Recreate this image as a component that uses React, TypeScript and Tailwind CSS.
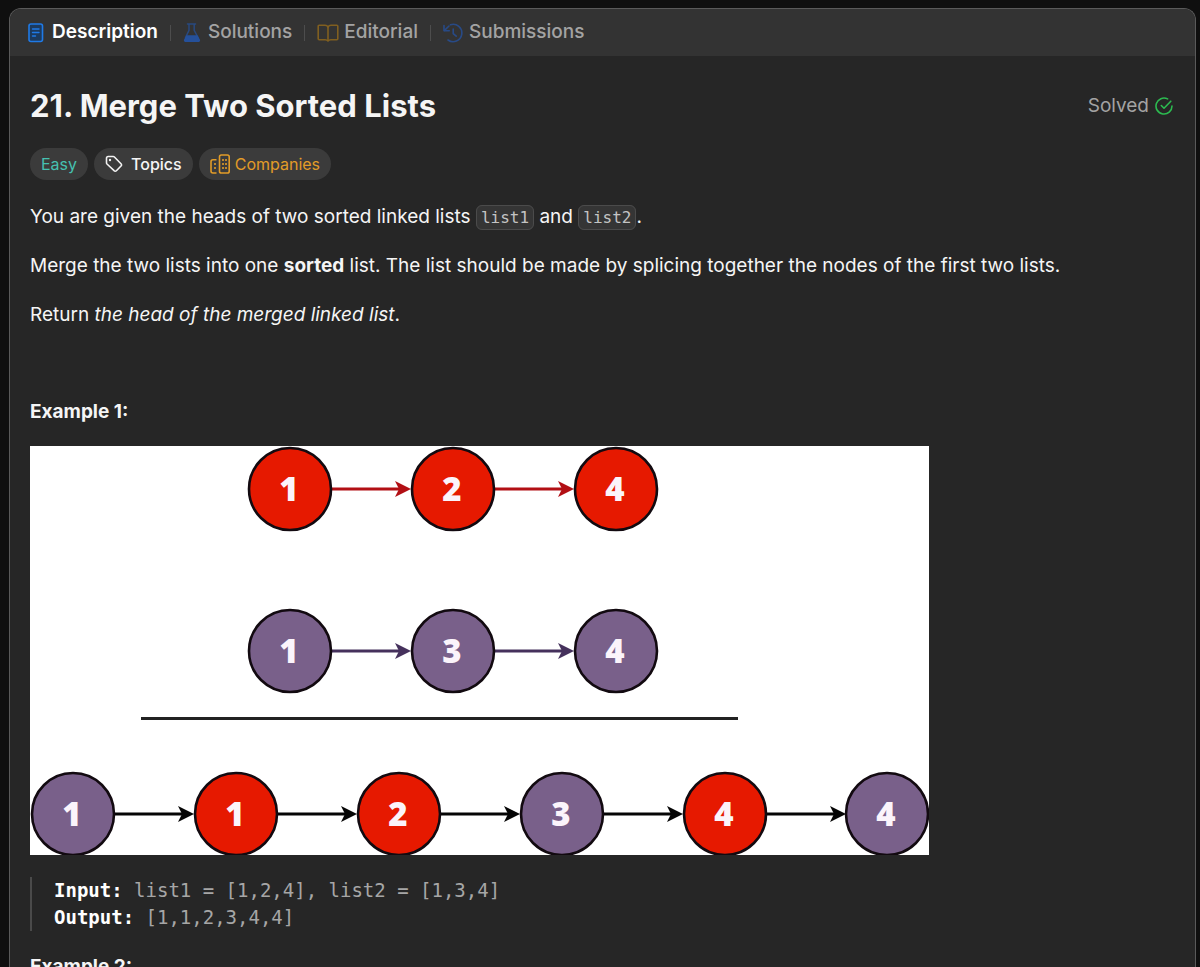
import React from 'react'

const RED = '#e61900'
const PURPLE = '#79608a'

type NodeItem = { x: number; y: number; value: number; fill: string }
type ArrowItem = { x: number; y: number; color: string }

const nodes: NodeItem[] = [
  { x: 260, y: 43, value: 1, fill: RED },
  { x: 423, y: 43, value: 2, fill: RED },
  { x: 586, y: 43, value: 4, fill: RED },
  { x: 260, y: 205, value: 1, fill: PURPLE },
  { x: 423, y: 205, value: 3, fill: PURPLE },
  { x: 586, y: 205, value: 4, fill: PURPLE },
  { x: 43, y: 368, value: 1, fill: PURPLE },
  { x: 206, y: 368, value: 1, fill: RED },
  { x: 369, y: 368, value: 2, fill: RED },
  { x: 532, y: 368, value: 3, fill: PURPLE },
  { x: 695, y: 368, value: 4, fill: RED },
  { x: 857, y: 368, value: 4, fill: PURPLE },
]

const arrows: ArrowItem[] = [
  { x: 302, y: 43, color: '#b20f14' },
  { x: 465, y: 43, color: '#b20f14' },
  { x: 302, y: 205, color: '#45315c' },
  { x: 465, y: 205, color: '#45315c' },
  { x: 85, y: 368, color: '#050505' },
  { x: 248, y: 368, color: '#050505' },
  { x: 411, y: 368, color: '#050505' },
  { x: 574, y: 368, color: '#050505' },
  { x: 737, y: 368, color: '#050505' },
]

function DescriptionIcon() {
  return (
    <svg className="w-4 h-5" viewBox="0 0 16 20" fill="none" stroke="#1f7ae6" aria-hidden="true">
      <rect x="1" y="1" width="13.5" height="17.5" rx="2" fill="#1c3a5e" strokeWidth="1.6" />
      <path d="M4.500 6h6.500M4.500 9.500h6.500M4.500 13h3" strokeWidth="1.4" strokeLinecap="round" />
    </svg>
  )
}

function FlaskIcon() {
  return (
    <svg className="w-[18px] h-5" viewBox="0 0 18 20" fill="none" aria-hidden="true">
      <path d="M4.500 1h8M6 1v6.400L2.500 14.500M11.200 1v6.400L15 14.500" stroke="#29497f" strokeWidth="1.5" strokeLinecap="round" />
      <path d="M3.500 12.200h11l2.400 4.400a1.600 1.600 0 0 1-1.400 2.400h-13a1.600 1.600 0 0 1-1.400-2.400z" fill="#25509a" />
    </svg>
  )
}

function BookIcon() {
  return (
    <svg className="w-[22px] h-5" viewBox="0 0 22 20" fill="none" stroke="#805f20" strokeWidth="1.6" strokeLinejoin="round" aria-hidden="true">
      <path d="M11 4c-.7-1.200-1.700-1.800-3-1.800H2.200c-.6 0-1 .4-1 1V15.800c0 .6.4 1 1 1h6c1.200 0 2.200.4 2.800 1.200.6-.8 1.600-1.200 2.800-1.200h6c.6 0 1-.4 1-1V3.200c0-.6-.4-1-1-1H14c-1.300 0-2.300.6-3 1.800z" />
      <path d="M11 4v14" />
    </svg>
  )
}

function HistoryIcon() {
  return (
    <svg className="w-5 h-5" viewBox="0 0 20 20" fill="none" stroke="#284a86" strokeWidth="1.6" strokeLinecap="round" strokeLinejoin="round" aria-hidden="true">
      <path d="M7.500 1.700A8.700 8.700 0 1 1 5 17" />
      <path d="M1 2.500v5.300h5.300" />
      <path d="M1.500 7.400 6 3" />
      <path d="M10.200 6v4.600l3 2.600" />
    </svg>
  )
}

function SolvedIcon() {
  return (
    <svg className="w-[18px] h-[18px]" viewBox="0 0 18 18" fill="none" stroke="#2cba50" strokeWidth="1.6" strokeLinecap="round" strokeLinejoin="round" aria-hidden="true">
      <path d="M12.600 1.900A8 8 0 1 0 17 9" />
      <path d="M6.300 8.500 9 11.200l6.800-7" />
    </svg>
  )
}

function TagIcon() {
  return (
    <svg className="w-[18px] h-[18px]" viewBox="0 0 18 18" fill="none" stroke="#f2f2f2" strokeWidth="1.600" strokeLinejoin="round" aria-hidden="true">
      <path d="M1.500 3.200c0-1 .7-1.700 1.700-1.700h5c.5 0 .9.200 1.200.5l6.600 6.700c.7.700.7 1.700 0 2.300l-4.600 4.700c-.7.700-1.700.7-2.300 0L2 9c-.3-.3-.5-.7-.5-1.200z" />
      <circle cx="5" cy="5" r="1.200" fill="#f2f2f2" stroke="none" />
    </svg>
  )
}

function CompaniesIcon() {
  return (
    <svg className="w-5 h-5" viewBox="0 0 20 20" fill="none" stroke="#e29c28" strokeWidth="1.600" strokeLinejoin="round" aria-hidden="true">
      <rect x="9.500" y="1" width="9.700" height="18" rx="1.800" />
      <path d="M6.500 5.800H3c-1.200 0-2 .8-2 2V17c0 1.200.8 2 2 2h3.500" />
      <path d="M13 5v2M13 9v2M13 13v2M16 5v2M16 9v2M16 13v2M5 9v2M5 13v2" strokeWidth="1.600" />
    </svg>
  )
}

const tabs = [
  { label: 'Description', icon: <DescriptionIcon />, style: 'gap-2 text-white font-semibold' },
  { label: 'Solutions', icon: <FlaskIcon />, style: 'gap-[7px] text-[#a3a3a3] font-medium' },
  { label: 'Editorial', icon: <BookIcon />, style: 'gap-[5px] text-[#a3a3a3] font-medium' },
  { label: 'Submissions', icon: <HistoryIcon />, style: 'gap-[6px] text-[#a3a3a3] font-medium' },
]

function Code({ children }: { children: React.ReactNode }) {
  return (
    <code className="rounded-md border border-[#4b4b4b] bg-[#353535] px-1 py-[2px] font-['DejaVu_Sans_Mono',monospace] text-base text-[#c4c4c4]">
      {children}
    </code>
  )
}

function MergeDiagram() {
  return (
    <svg
      className="mt-5 block w-full max-w-[899px] bg-white"
      viewBox="0 0 899 409"
      role="img"
      aria-label="Two sorted linked lists merged into one"
    >
      {arrows.map((a) => (
        <g key={`${a.x}-${a.y}`}>
          <path d={`M${a.x} ${a.y}h70`} stroke={a.color} strokeWidth="2.800" />
          <path d={`M${a.x + 79} ${a.y}l-16 -8 4 8 -4 8z`} fill={a.color} />
        </g>
      ))}
      {nodes.map((n) => (
        <g key={`${n.x}-${n.y}`}>
          <circle cx={n.x} cy={n.y} r="41" fill={n.fill} stroke="#120a10" strokeWidth="2.600" />
          <text x={n.x - 1} y={n.y + 12} textAnchor="middle" fill="#fbf4fb" className="font-['Open_Sans',sans-serif] text-[33px] font-extrabold">
            {n.value}
          </text>
        </g>
      ))}
      <path d="M111 272.500h597" stroke="#222" strokeWidth="3" />
    </svg>
  )
}

export default function App() {
  return (
    <div className="h-screen bg-[#0f0f0f] pt-2 pl-[9px] pr-1 font-['Inter',sans-serif]">
      <div className="flex h-full flex-col overflow-hidden rounded-t-xl border border-b-0 border-[#5a5a5a] bg-[#262626]">
        <nav className="flex h-[47px] shrink-0 items-center bg-[#333333] px-[18px] text-[19px]">
          {tabs.map((tab, i) => (
            <React.Fragment key={tab.label}>
              {i > 0 && <span className="mx-3 h-4 w-px bg-[#4d4d4d]" />}
              <button type="button" className={`flex items-center ${tab.style}`}>
                {tab.icon}
                {tab.label}
              </button>
            </React.Fragment>
          ))}
        </nav>

        <main className="min-h-0 flex-1 overflow-y-auto px-5 pt-7 text-[19px] leading-7 text-[#f5f5f5] [scrollbar-width:none]">
          <div className="flex items-center justify-between">
            <h1 className="text-[31px] font-bold leading-[44px]">21. Merge Two Sorted Lists</h1>
            <div className="flex items-center gap-[6px] pr-[2px] text-[#a3a3a3]">
              Solved
              <SolvedIcon />
            </div>
          </div>

          <div className="mt-5 flex gap-[6px] text-base">
            <span className="flex h-8 items-center rounded-full bg-[#3b3b3b] px-[11px] text-[#46c1b1]">Easy</span>
            <button type="button" className="flex h-8 items-center gap-2 rounded-full bg-[#3b3b3b] px-[11px] font-medium">
              <TagIcon />
              Topics
            </button>
            <button type="button" className="flex h-8 items-center gap-[5px] rounded-full bg-[#3b3b3b] px-[11px] text-[#e29c28]">
              <CompaniesIcon />
              Companies
            </button>
          </div>

          <p className="mt-[23px]">
            You are given the heads of two sorted linked lists <Code>list1</Code> and <Code>list2</Code>.
          </p>
          <p className="mt-[21px]">
            Merge the two lists into one <strong className="font-bold">sorted</strong> list. The list should be made by splicing together the nodes of the first two lists.
          </p>
          <p className="mt-[21px]">
            Return <em>the head of the merged linked list</em>.
          </p>

          <p className="mt-[69px] font-bold">Example 1:</p>
          <MergeDiagram />
          <pre className="mt-[22px] border-l-2 border-[#4a4a4a] pl-[22px] font-['DejaVu_Sans_Mono',monospace] text-[19px] leading-[27px] text-[#a6a6a6]">
            <strong className="text-white">Input:</strong> list1 = [1,2,4], list2 = [1,3,4]{'\n'}
            <strong className="text-white">Output:</strong> [1,1,2,3,4,4]
          </pre>
          <p className="mt-[22px] font-bold">Example 2:</p>
        </main>
      </div>
    </div>
  )
}
